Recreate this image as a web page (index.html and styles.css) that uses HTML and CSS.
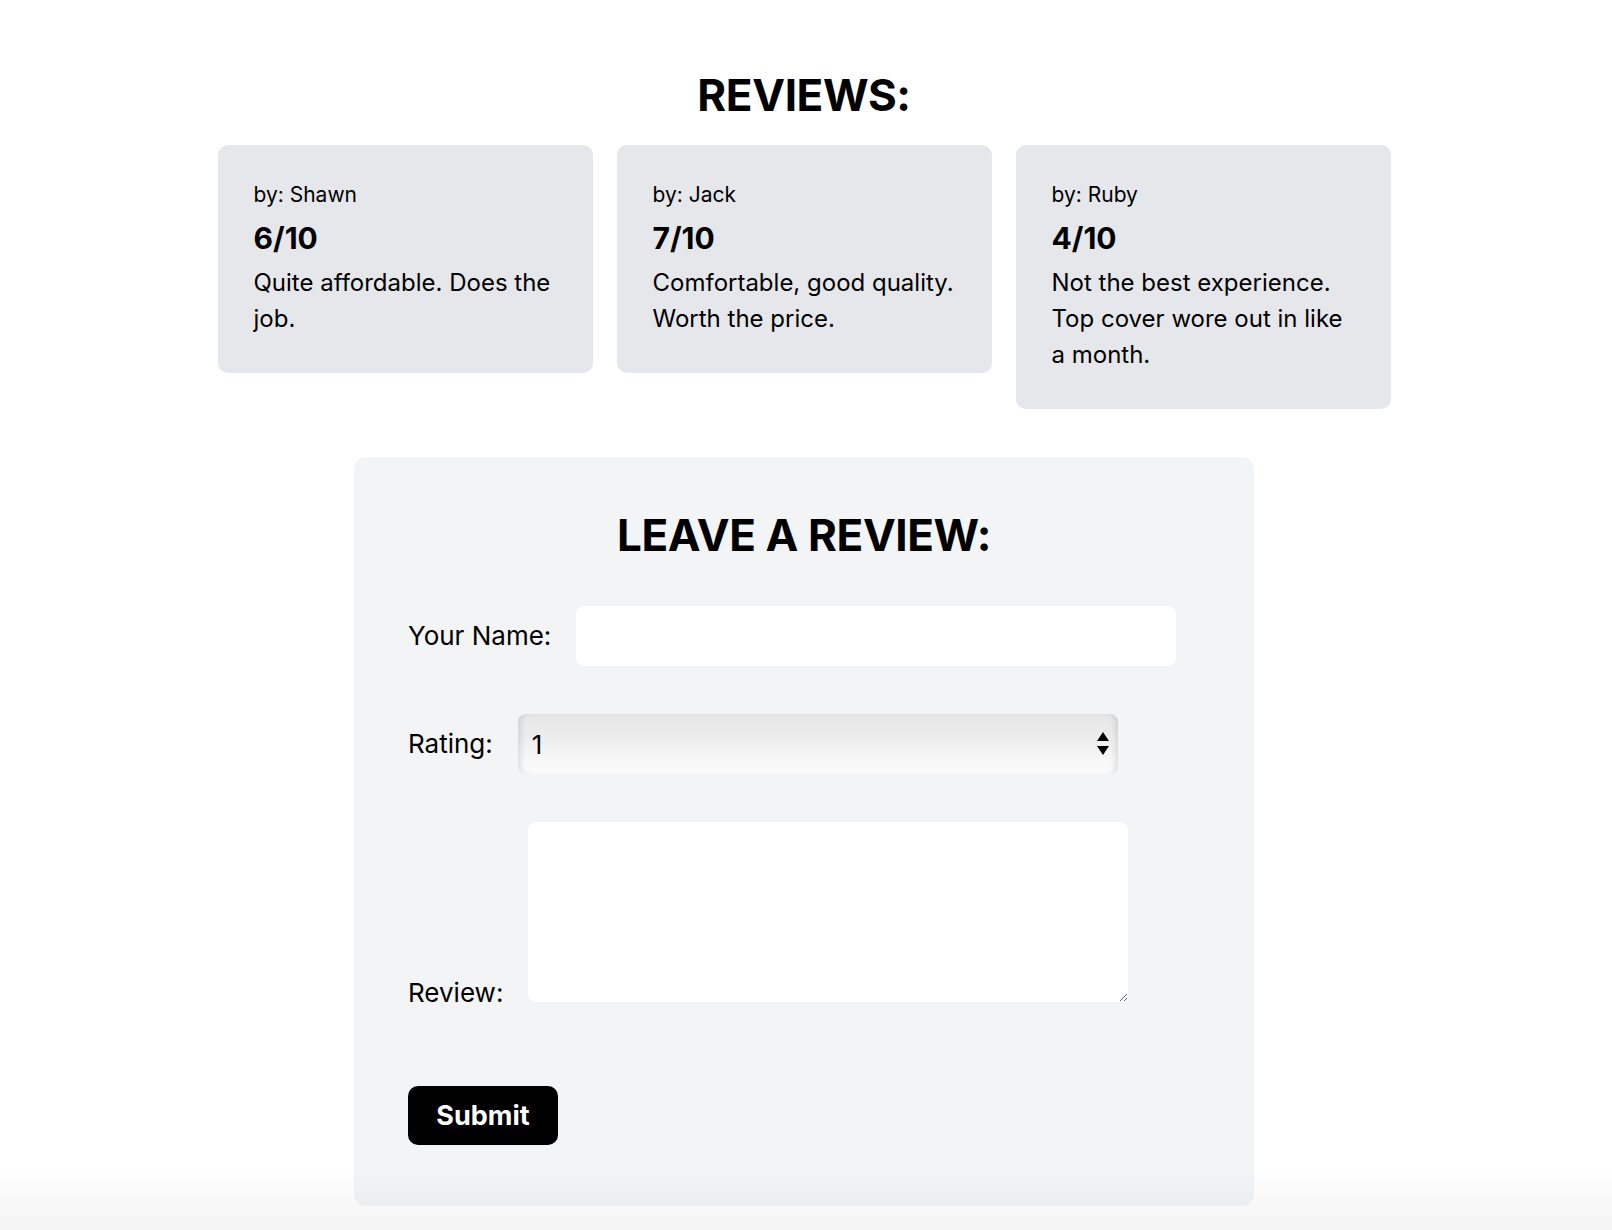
FILE: index.html
```html
<!DOCTYPE html>
<html lang="en">
<head>
<meta charset="utf-8">
<title>Reviews</title>
<link rel="stylesheet" href="styles.css">
</head>
<body>
<main class="page">
  <h1 class="section-title">REVIEWS:</h1>
  <section class="review-list">
    <article class="review-card">
      <p class="review-author">by: Shawn</p>
      <h3 class="review-score">6/10</h3>
      <p class="review-text">Quite affordable. Does the job.</p>
    </article>
    <article class="review-card">
      <p class="review-author">by: Jack</p>
      <h3 class="review-score">7/10</h3>
      <p class="review-text">Comfortable, good quality. Worth the price.</p>
    </article>
    <article class="review-card">
      <p class="review-author">by: Ruby</p>
      <h3 class="review-score">4/10</h3>
      <p class="review-text">Not the best experience. Top cover wore out in like a month.</p>
    </article>
  </section>

  <section class="review-form-panel">
    <h2 class="section-title form-title">LEAVE A REVIEW:</h2>
    <form class="review-form">
      <div class="form-row">
        <label class="form-label" for="name">Your Name:</label>
        <input class="text-input" id="name" type="text">
      </div>
      <div class="form-row">
        <label class="form-label" for="rating">Rating:</label>
        <div class="select-wrap">
          <select class="select-input" id="rating">
            <option>1</option>
            <option>2</option>
            <option>3</option>
            <option>4</option>
            <option>5</option>
            <option>6</option>
            <option>7</option>
            <option>8</option>
            <option>9</option>
            <option>10</option>
          </select>
        </div>
      </div>
      <div class="form-row form-row-area">
        <label class="form-label form-label-area" for="review">Review:</label>
        <textarea class="textarea-input" id="review"></textarea>
      </div>
      <button class="submit-btn" type="button">Submit</button>
    </form>
  </section>
</main>
<div class="bottom-fade"></div>
</body>
</html>
```

FILE: styles.css
```css
* {
  box-sizing: border-box;
}

html, body {
  margin: 0;
  padding: 0;
  background: #ffffff;
}

body {
  font-family: Inter, "Noto Sans", "Liberation Sans", sans-serif;
  color: #000;
}

.page {
  display: flex;
  flex-direction: column;
  align-items: center;
  padding: 0 4px 40px 0;
}

.section-title {
  margin: 71px 0 26px;
  font-size: 44px;
  line-height: 48px;
  font-weight: 700;
  text-align: center;
  letter-spacing: -0.4px;
}

.review-list {
  display: flex;
  gap: 24px;
  align-items: flex-start;
  justify-content: center;
}

.review-card {
  width: 375px;
  background: #e5e7eb;
  border-radius: 10px;
  padding: 36px 34px 36px 36px;
}

.review-author {
  margin: 0;
  font-size: 21px;
  line-height: 28px;
}

.review-score {
  margin: 9px 0 0;
  font-size: 30px;
  line-height: 40px;
  font-weight: 700;
}

.review-text {
  margin: 7px 0 0;
  font-size: 24px;
  line-height: 36px;
}

.review-form-panel {
  width: 900px;
  margin-top: 48px;
  background: #f3f4f6;
  border-radius: 12px;
  padding: 54px 54px 61px;
}

.form-title {
  margin: 0 0 47px;
}

.review-form {
  display: flex;
  flex-direction: column;
  align-items: flex-start;
}

.form-row {
  display: flex;
  align-items: center;
  gap: 25px;
  margin-bottom: 48px;
}

.form-row-area {
  align-items: flex-end;
  margin-bottom: 84px;
}

.form-label {
  font-size: 26px;
  line-height: 32px;
}

.form-label-area {
  margin-bottom: -7px;
}

.text-input,
.textarea-input,
.select-input {
  width: 600px;
  border: none;
  border-radius: 8px;
  background: #fff;
  font-family: inherit;
  font-size: 26px;
  outline: none;
}

.text-input {
  height: 60px;
  padding: 0 14px;
}

.textarea-input {
  display: block;
  height: 180px;
  padding: 12px 14px;
  resize: both;
}

.select-wrap {
  position: relative;
  width: 600px;
  height: 60px;
}

.select-input {
  -webkit-appearance: none;
  appearance: none;
  height: 60px;
  padding: 0 14px;
  color: #000;
  background: linear-gradient(#e6e6e6 0%, #ececec 35%, #f8f8f8 80%, #fbfbfb 100%);
  box-shadow: inset 6px 0 6px -4px rgba(0, 0, 0, 0.12), inset -6px 0 6px -4px rgba(0, 0, 0, 0.12);
}

.select-wrap::before,
.select-wrap::after {
  content: "";
  position: absolute;
  right: 9px;
  width: 0;
  height: 0;
  border-left: 6px solid transparent;
  border-right: 6px solid transparent;
  pointer-events: none;
}

.select-wrap::before {
  top: 18px;
  border-bottom: 9px solid #000;
}

.select-wrap::after {
  top: 32px;
  border-top: 9px solid #000;
}

.submit-btn {
  width: 150px;
  height: 59px;
  border: none;
  border-radius: 10px;
  background: #000;
  color: #fff;
  font-family: inherit;
  font-size: 27px;
  font-weight: 700;
  cursor: pointer;
}

.bottom-fade {
  position: fixed;
  left: 0;
  right: 0;
  bottom: 0;
  height: 62px;
  background: linear-gradient(rgba(0, 0, 0, 0), rgba(0, 0, 0, 0.045));
  pointer-events: none;
}
```
